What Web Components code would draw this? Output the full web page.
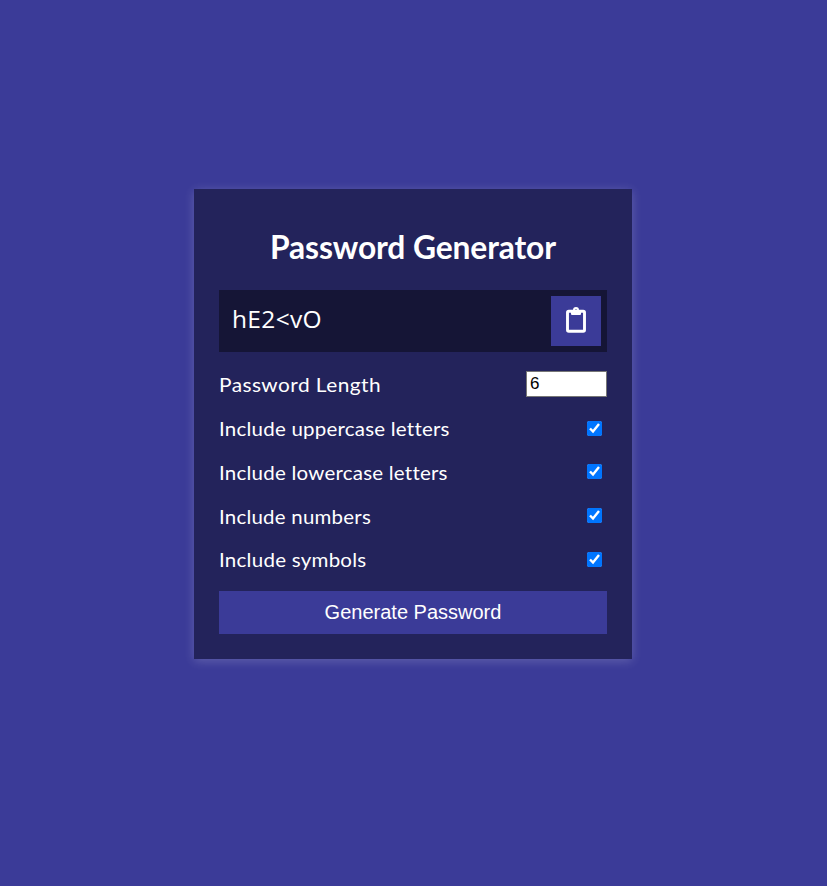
<!DOCTYPE html>
<html lang="en"><head><meta charset="utf-8"><title>Password Generator</title>
<style>
body{margin:0;min-height:100vh;background:#3b3b98;color:#fff;font-family:Lato,"Open Sans",sans-serif;display:flex;align-items:flex-start;justify-content:center;padding:189px 1px 0 0;box-sizing:border-box;overflow:hidden}
</style></head><body>
<password-generator></password-generator>
<script>
class FitText extends HTMLElement{
  constructor(){super();this.attachShadow({mode:'open'}).innerHTML='<style>:host{display:block;white-space:nowrap}span{display:inline-block;transform-origin:0 50%}</style><span><slot></slot></span>';}
  connectedCallback(){
    const s=this.shadowRoot.querySelector('span'),w=+this.getAttribute('width'),n=this.textContent.length;
    const natural=s.getBoundingClientRect().width,scale=Math.sqrt(w/natural);
    s.style.letterSpacing=((w/scale-natural)/n)+'px';
    s.style.transform='scaleX('+scale+')';
    this.style.width=w+'px';
  }
}
class CopyButton extends HTMLElement{
  constructor(){super();this.attachShadow({mode:'open'}).innerHTML=`<style>:host{display:block}button{display:flex;align-items:center;justify-content:center;width:50px;height:50px;border:0;padding:0 0 2px;box-sizing:border-box;background:#3b3b98;color:#fff}</style>
  <button aria-label="Copy"><svg width="20" height="26" viewBox="0 0 20 26"><rect x="1.500" y="4.300" width="17" height="20" rx="1.300" fill="none" stroke="currentColor" stroke-width="2.900"/><path fill="currentColor" fill-rule="evenodd" d="M5 3H7a3 3 0 0 1 6 0h2V7a1 1 0 0 1-1 1H6a1 1 0 0 1-1-1ZM10 2.200a1.100 1.100 0 1 0 0 2.200a1.100 1.100 0 1 0 0-2.200Z"/></svg></button>`;}
}
class SettingRow extends HTMLElement{
  constructor(){super();this.attachShadow({mode:'open'}).innerHTML='<style>:host{display:flex;align-items:center;justify-content:space-between;height:26px;margin:0 0 17.800px;font-size:20px}</style><slot></slot><slot name="control"></slot>';}
}
class PasswordGenerator extends HTMLElement{
  constructor(){super();this.attachShadow({mode:'open'}).innerHTML=`<style>
  :host{display:block;box-sizing:border-box;width:438px;height:470px;padding:25px;background:#23235b;box-shadow:0 2px 10px rgba(255,255,255,.2)}
  h2{margin:13px 0 24px;height:39px;line-height:39px;font-size:32px;display:flex;justify-content:center}
  .result{display:flex;align-items:center;justify-content:space-between;height:62px;box-sizing:border-box;padding:6px 6px 6px 12.500px;background:rgba(0,0,0,.4);font-size:24px;margin-bottom:19.400px}
  .password{font-family:"Open Sans",sans-serif;padding-bottom:6px}
  setting-row:last-of-type{margin-top:-18.050px;padding-top:17.800px;margin-bottom:18.400px}
  input[type=checkbox]{width:15px;height:15px;margin:0 5px 0 0}
  input[type=number]{width:81px;height:26px;box-sizing:border-box;font:17px "Liberation Sans",sans-serif;padding:1px 3px 2px;border:1px solid #767676;background:#fff;color:#000}
  .generate{display:block;width:100%;height:43px;border:0;background:#3b3b98;color:#fff;font:20px "Liberation Sans",sans-serif}
  </style>
  <h2><fit-text width="286">Password Generator</fit-text></h2>
  <div class="result"><fit-text width="90" class="password">hE2&lt;vO</fit-text><copy-button></copy-button></div>
  <setting-row><fit-text width="162">Password Length</fit-text><input slot="control" type="number" value="6"></setting-row>
  <setting-row><fit-text width="230">Include uppercase letters</fit-text><input slot="control" type="checkbox" checked></setting-row>
  <setting-row><fit-text width="228">Include lowercase letters</fit-text><input slot="control" type="checkbox" checked></setting-row>
  <setting-row><fit-text width="152">Include numbers</fit-text><input slot="control" type="checkbox" checked></setting-row>
  <setting-row><fit-text width="147.500">Include symbols</fit-text><input slot="control" type="checkbox" checked></setting-row>
  <button class="generate">Generate Password</button>`;}
}
customElements.define('fit-text',FitText);
customElements.define('copy-button',CopyButton);
customElements.define('setting-row',SettingRow);
customElements.define('password-generator',PasswordGenerator);
</script></body></html>
